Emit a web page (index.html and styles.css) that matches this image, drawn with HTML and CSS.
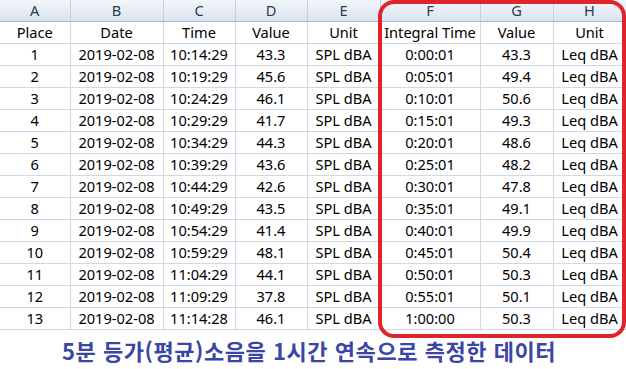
FILE: index.html
```html
<!DOCTYPE html>
<html lang="ko">
<head>
<meta charset="utf-8">
<link rel="stylesheet" href="styles.css">
</head>
<body>
<div class="sheet">
  <table class="grid">
    <colgroup>
      <col class="c-a"><col class="c-b"><col class="c-c"><col class="c-d">
      <col class="c-e"><col class="c-f"><col class="c-g"><col class="c-h">
    </colgroup>
    <thead>
      <tr class="hdr"><th>A</th><th>B</th><th>C</th><th>D</th><th>E</th><th>F</th><th>G</th><th>H</th></tr>
    </thead>
    <tbody>
      <tr><td>Place</td><td>Date</td><td>Time</td><td>Value</td><td>Unit</td><td>Integral Time</td><td>Value</td><td>Unit</td></tr>
      <tr><td>1</td><td>2019-02-08</td><td>10:14:29</td><td>43.3</td><td>SPL dBA</td><td>0:00:01</td><td>43.3</td><td>Leq dBA</td></tr>
      <tr><td>2</td><td>2019-02-08</td><td>10:19:29</td><td>45.6</td><td>SPL dBA</td><td>0:05:01</td><td>49.4</td><td>Leq dBA</td></tr>
      <tr><td>3</td><td>2019-02-08</td><td>10:24:29</td><td>46.1</td><td>SPL dBA</td><td>0:10:01</td><td>50.6</td><td>Leq dBA</td></tr>
      <tr><td>4</td><td>2019-02-08</td><td>10:29:29</td><td>41.7</td><td>SPL dBA</td><td>0:15:01</td><td>49.3</td><td>Leq dBA</td></tr>
      <tr><td>5</td><td>2019-02-08</td><td>10:34:29</td><td>44.3</td><td>SPL dBA</td><td>0:20:01</td><td>48.6</td><td>Leq dBA</td></tr>
      <tr><td>6</td><td>2019-02-08</td><td>10:39:29</td><td>43.6</td><td>SPL dBA</td><td>0:25:01</td><td>48.2</td><td>Leq dBA</td></tr>
      <tr><td>7</td><td>2019-02-08</td><td>10:44:29</td><td>42.6</td><td>SPL dBA</td><td>0:30:01</td><td>47.8</td><td>Leq dBA</td></tr>
      <tr><td>8</td><td>2019-02-08</td><td>10:49:29</td><td>43.5</td><td>SPL dBA</td><td>0:35:01</td><td>49.1</td><td>Leq dBA</td></tr>
      <tr><td>9</td><td>2019-02-08</td><td>10:54:29</td><td>41.4</td><td>SPL dBA</td><td>0:40:01</td><td>49.9</td><td>Leq dBA</td></tr>
      <tr><td>10</td><td>2019-02-08</td><td>10:59:29</td><td>48.1</td><td>SPL dBA</td><td>0:45:01</td><td>50.4</td><td>Leq dBA</td></tr>
      <tr><td>11</td><td>2019-02-08</td><td>11:04:29</td><td>44.1</td><td>SPL dBA</td><td>0:50:01</td><td>50.3</td><td>Leq dBA</td></tr>
      <tr><td>12</td><td>2019-02-08</td><td>11:09:29</td><td>37.8</td><td>SPL dBA</td><td>0:55:01</td><td>50.1</td><td>Leq dBA</td></tr>
      <tr><td>13</td><td>2019-02-08</td><td>11:14:28</td><td>46.1</td><td>SPL dBA</td><td>1:00:00</td><td>50.3</td><td>Leq dBA</td></tr>
    </tbody>
  </table>
  <div class="highlight"></div>
  <p class="caption">5분 등가(평균)소음을 1시간 연속으로 측정한 데이터</p>
</div>
</body>
</html>
```

FILE: styles.css
```css
html, body {
  margin: 0;
  padding: 0;
  background: #ffffff;
}

.sheet {
  position: relative;
  width: 626px;
  height: 369px;
  overflow: hidden;
  font-family: "Noto Sans", "Noto Sans CJK KR", sans-serif;
  color: #000;
}

.grid {
  border-collapse: collapse;
  table-layout: fixed;
  width: 626px;
  font-size: 14.6px;
}

.c-a { width: 70px; }
.c-b { width: 93px; }
.c-c { width: 72px; }
.c-d { width: 72px; }
.c-e { width: 73px; }
.c-f { width: 100px; }
.c-g { width: 73px; }
.c-h { width: 73px; }

.grid th,
.grid td {
  height: 21px;
  padding: 0;
  text-align: center;
  white-space: nowrap;
  line-height: 21px;
}

.grid th {
  font-weight: normal;
  color: #2a3b52;
  background: linear-gradient(#f2f6fb, #dbe3ee);
  border-right: 1px solid #c6d2e2;
  border-bottom: 1px solid #9eb6ce;
}

.grid td {
  border-right: 1px solid #d0d7e5;
  border-bottom: 1px solid #d0d7e5;
}

.highlight {
  position: absolute;
  left: 378px;
  top: 0;
  width: 240px;
  height: 330px;
  border: 4px solid #e0242c;
  border-radius: 16px;
}

.caption {
  margin: 6px 0 0;
  padding-left: 62px;
  font-family: "Noto Sans CJK KR", sans-serif;
  font-weight: bold;
  font-size: 22px;
  line-height: 28px;
  letter-spacing: 0.55px;
  color: #3b45a6;
}
```
